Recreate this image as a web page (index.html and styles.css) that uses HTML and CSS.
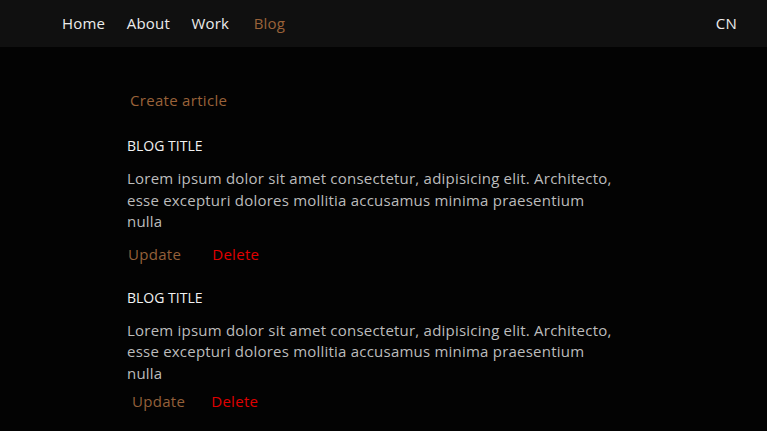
FILE: index.html
```html
<!DOCTYPE html>
<html lang="en">
<head>
<meta charset="utf-8">
<title>Blog</title>
<link rel="stylesheet" href="styles.css">
</head>
<body>
<header class="nav">
  <nav class="nav-links">
    <a class="nav-link" href="#">Home</a>
    <a class="nav-link" href="#">About</a>
    <a class="nav-link" href="#">Work</a>
    <a class="nav-link active" href="#">Blog</a>
  </nav>
  <a class="nav-link lang" href="#">CN</a>
</header>
<main class="content">
  <a class="create" href="#">Create article</a>
  <article class="post">
    <h2 class="post-title">BLOG TITLE</h2>
    <p class="post-body">Lorem ipsum dolor sit amet consectetur, adipisicing elit. Architecto, esse excepturi dolores mollitia accusamus minima praesentium nulla</p>
    <div class="actions">
      <a class="btn update" href="#">Update</a>
      <a class="btn delete" href="#">Delete</a>
    </div>
  </article>
  <article class="post">
    <h2 class="post-title">BLOG TITLE</h2>
    <p class="post-body">Lorem ipsum dolor sit amet consectetur, adipisicing elit. Architecto, esse excepturi dolores mollitia accusamus minima praesentium nulla</p>
    <div class="actions actions-alt">
      <a class="btn update" href="#">Update</a>
      <a class="btn delete" href="#">Delete</a>
    </div>
  </article>
</main>
</body>
</html>
```
FILE: styles.css
```css
* { box-sizing: border-box; }
html, body {
  margin: 0;
  padding: 0;
  background: #030303;
  font-family: "Open Sans", "DejaVu Sans", sans-serif;
  height: 100%;
  overflow: hidden;
}
a { text-decoration: none; }
.nav {
  height: 47px;
  background: #101010;
  display: flex;
  align-items: center;
  justify-content: space-between;
  padding: 0 30px 2px 62px;
}
.nav-links {
  display: flex;
  gap: 21.5px;
}
.nav-link {
  color: #ececec;
  font-size: 15px;
  letter-spacing: 0.2px;
}
.nav-link.active {
  color: #9a6239;
  margin-left: 3px;
}
.content {
  padding: 41px 0 0 127px;
  width: 620px;
}
.create {
  display: inline-block;
  color: #9a6239;
  font-size: 15px;
  line-height: 24px;
  margin-left: 3px;
  letter-spacing: 0.3px;
}
.post {
  margin-top: 24px;
}
.post + .post { margin-top: 22px; }
.post-title {
  margin: 0;
  color: #f2f2f2;
  font-size: 14px;
  font-weight: 400;
  line-height: 20px;
}
.post-body {
  margin: 12px 0 0;
  color: #bcbcbc;
  font-size: 15px;
  line-height: 21.5px;
  max-width: 490px;
  letter-spacing: 0.22px;
}
.actions {
  display: flex;
  gap: 31px;
  margin-top: 9px;
  padding-left: 1px;
  line-height: 24px;
}
.actions-alt {
  padding-left: 5px;
  gap: 26px;
  margin-top: 5px;
}
.btn { font-size: 15px; letter-spacing: 0.3px; }
.update { color: #94603a; }
.delete { color: #e00000; }
```
